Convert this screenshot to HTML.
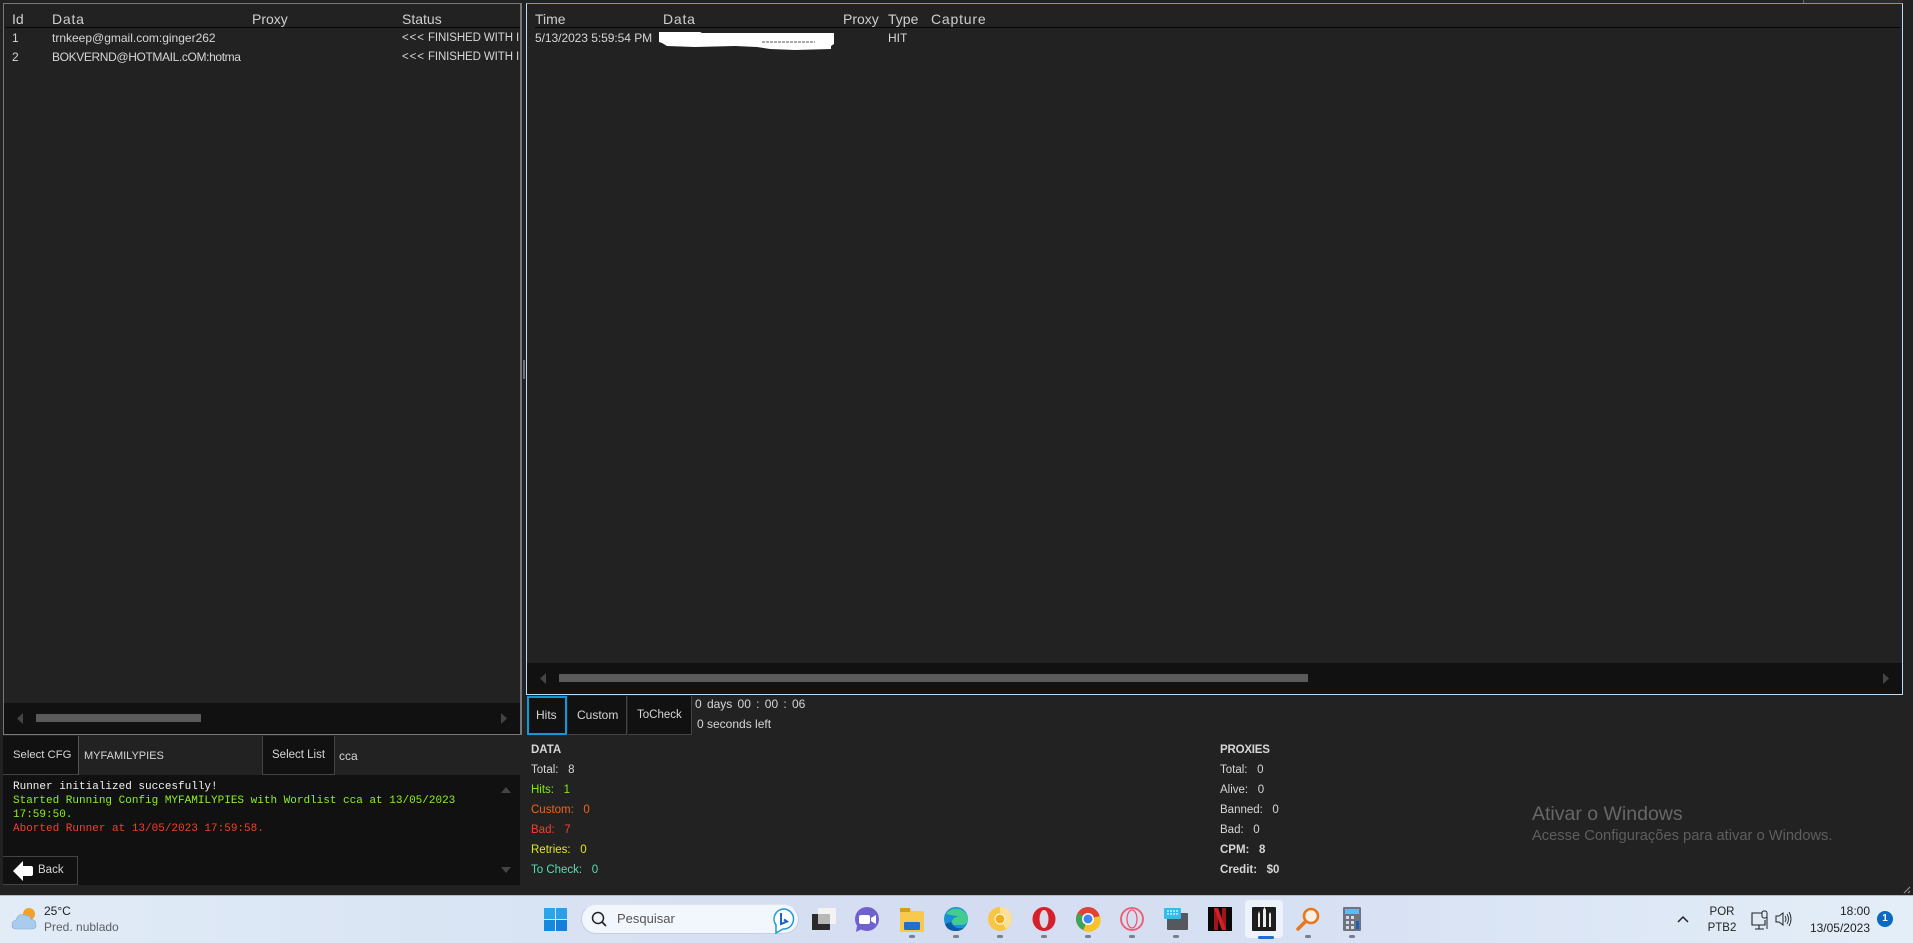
<!DOCTYPE html>
<html><head><meta charset="utf-8"><title>Runner</title>
<style>
html,body{margin:0;padding:0;width:1913px;height:943px;overflow:hidden;background:#222;}
body{position:relative;font-family:"Liberation Sans",sans-serif;color:#dcdcdc;}
.a{position:absolute;box-sizing:border-box;}
.t{position:absolute;white-space:nowrap;line-height:16px;font-size:12px;color:#d6d6d6;}
.h{font-size:14px;color:#cfcfcf;}
.n{font-size:11.500px;}
.b{font-weight:bold;}
.m{font-family:"Liberation Mono",monospace;font-size:11px;line-height:14px;}
.tb{font-family:"Liberation Sans","DejaVu Sans",sans-serif;color:#222;}
.dot{position:absolute;top:935px;width:6px;height:3px;border-radius:2px;background:#7a7f88;}
svg{position:absolute;overflow:visible;}
</style></head><body>

<!-- top strip pieces -->
<div class="a" style="left:1803px;top:0;width:99px;height:3px;background:#2b2b2b;border-left:1px solid #666;"></div>

<!-- left panel -->
<div class="a" style="left:3px;top:3px;width:519px;height:732px;border:1px solid #777;border-right-width:2px;background:#222;"></div>
<div class="a" style="left:5px;top:27px;width:515px;height:1px;background:#050505;"></div>
<div class="t h" style="left:12px;top:11px;">Id</div>
<div class="t h" style="left:52px;top:11px;letter-spacing:.8px;">Data</div>
<div class="t h" style="left:252px;top:11px;">Proxy</div>
<div class="t h" style="left:402px;top:11px;">Status</div>
<div class="t" style="left:12px;top:30px;">1</div>
<div class="t" style="left:52px;top:30px;">trnkeep@gmail.com:ginger262</div>
<div class="t n" style="left:402px;top:30px;width:118px;overflow:hidden;letter-spacing:-.1px;"><span style="letter-spacing:.9px;">&lt;&lt;&lt;</span> FINISHED WITH I</div>
<div class="t" style="left:12px;top:49px;">2</div>
<div class="t" style="left:52px;top:49px;letter-spacing:-.37px;">BOKVERND@HOTMAIL.cOM:hotma</div>
<div class="t n" style="left:402px;top:49px;width:118px;overflow:hidden;letter-spacing:-.1px;"><span style="letter-spacing:.9px;">&lt;&lt;&lt;</span> FINISHED WITH I</div>
<!-- left scrollbar -->
<div class="a" style="left:4px;top:703px;width:516px;height:31px;background:#111;"></div>
<div class="a" style="left:36px;top:714px;width:165px;height:8px;background:#5a5a5a;"></div>
<svg style="left:0;top:0" width="1" height="1"><path d="M23 713L17 718.500L23 724Z" fill="#444"/><path d="M501 713L507 718.500L501 724Z" fill="#444"/></svg>

<!-- splitter -->
<div class="a" style="left:523px;top:360px;width:2px;height:19px;background:#707070;"></div>

<!-- right panel -->
<div class="a" style="left:526px;top:3px;width:1377px;height:692px;border:1px solid #bcdcf5;border-top-color:#6e9ab8;background:#222;"></div>
<div class="a" style="left:535px;top:27px;width:1365px;height:1px;background:#050505;"></div>
<div class="t h" style="left:535px;top:11px;">Time</div>
<div class="t h" style="left:663px;top:11px;letter-spacing:.8px;">Data</div>
<div class="t h" style="left:843px;top:11px;">Proxy</div>
<div class="t h" style="left:888px;top:11px;">Type</div>
<div class="t h" style="left:931px;top:11px;letter-spacing:.8px;">Capture</div>
<div class="t" style="left:535px;top:30px;letter-spacing:-.05px;">5/13/2023 5:59:54 PM</div>
<div class="t" style="left:888px;top:30px;">HIT</div>
<svg style="left:0;top:0" width="1" height="1"><path d="M659 32H700L702 33H834V44L831 46V49L795 50L770 49L757 47L735 46L695 47L667 46L662 43L659 42Z" fill="#fff"/><path d="M762 42H815" stroke="#555" stroke-width="1" stroke-dasharray="3 1"/></svg>
<!-- right scrollbar -->
<div class="a" style="left:527px;top:663px;width:1375px;height:31px;background:#111;"></div>
<div class="a" style="left:559px;top:674px;width:749px;height:8px;background:#5a5a5a;"></div>
<svg style="left:0;top:0" width="1" height="1"><path d="M546 673L540 678.500L546 684Z" fill="#444"/><path d="M1883 673L1889 678.500L1883 684Z" fill="#444"/></svg>

<!-- select row -->
<div class="a" style="left:3px;top:736px;width:76px;height:39px;background:#111;border-right:1px solid #555;border-bottom:1px solid #444;"></div>
<div class="t" style="left:13px;top:747px;font-size:11.300px;">Select CFG</div>
<div class="t" style="left:84px;top:748px;font-size:11px;">MYFAMILYPIES</div>
<div class="a" style="left:262px;top:736px;width:73px;height:39px;background:#111;border:1px solid #444;border-top:none;"></div>
<div class="t" style="left:272px;top:747px;font-size:11.500px;">Select List</div>
<div class="t" style="left:339px;top:748px;">cca</div>

<!-- log -->
<div class="a" style="left:3px;top:775px;width:517px;height:110px;background:#111;"></div>
<div class="t m" style="left:13px;top:780px;color:#f2f2f2;">Runner initialized succesfully!</div>
<div class="t m" style="left:13px;top:794px;color:#8ef01e;">Started Running Config MYFAMILYPIES with Wordlist cca at 13/05/2023</div>
<div class="t m" style="left:13px;top:808px;color:#8ef01e;">17:59:50.</div>
<div class="t m" style="left:13px;top:822px;color:#f4402a;">Aborted Runner at 13/05/2023 17:59:58.</div>
<svg style="left:0;top:0" width="1" height="1"><path d="M501 793L506 787L511 793Z" fill="#444"/><path d="M501 867L506 873L511 867Z" fill="#444"/></svg>
<!-- back -->
<div class="a" style="left:3px;top:856px;width:75px;height:29px;background:#111;border:1px solid #444;border-left:none;"></div>
<svg style="left:0;top:0" width="1" height="1"><path d="M13 871L23 861V866H31Q33 866 33 868V874Q33 876 31 876H23V881Z" fill="#fff"/></svg>
<div class="t" style="left:38px;top:862px;font-size:11.500px;">Back</div>

<!-- tabs -->
<div class="a" style="left:527px;top:696px;width:40px;height:39px;background:#111;border:2px solid #0a9bd8;"></div>
<div class="t" style="left:536px;top:707px;">Hits</div>
<div class="a" style="left:568px;top:696px;width:59px;height:39px;background:#111;border-right:1px solid #444;border-bottom:1px solid #444;"></div>
<div class="t" style="left:577px;top:707px;">Custom</div>
<div class="a" style="left:628px;top:696px;width:64px;height:39px;background:#111;border-right:1px solid #444;border-bottom:1px solid #444;"></div>
<div class="t" style="left:637px;top:707px;font-size:11.500px;">ToCheck</div>
<div class="t" style="left:695px;top:696px;word-spacing:-.7px;">0&nbsp; days&nbsp; 00&nbsp; :&nbsp; 00&nbsp; :&nbsp; 06</div>
<div class="t" style="left:697px;top:716px;">0 seconds left</div>

<!-- stats left -->
<div class="t b n" style="left:531px;top:742px;">DATA</div>
<div class="t n" style="left:531px;top:762px;">Total:&nbsp;&nbsp; 8</div>
<div class="t n" style="left:531px;top:782px;color:#7fe81a;">Hits:&nbsp;&nbsp; 1</div>
<div class="t n" style="left:531px;top:802px;color:#f0651a;">Custom:&nbsp;&nbsp; 0</div>
<div class="t n" style="left:531px;top:822px;color:#f4402a;">Bad:&nbsp;&nbsp; 7</div>
<div class="t n" style="left:531px;top:842px;color:#e0e81a;">Retries:&nbsp;&nbsp; 0</div>
<div class="t n" style="left:531px;top:862px;color:#55dfb0;">To Check:&nbsp;&nbsp; 0</div>

<!-- stats right -->
<div class="t b n" style="left:1220px;top:742px;letter-spacing:-.2px;">PROXIES</div>
<div class="t n" style="left:1220px;top:762px;">Total:&nbsp;&nbsp; 0</div>
<div class="t n" style="left:1220px;top:782px;">Alive:&nbsp;&nbsp; 0</div>
<div class="t n" style="left:1220px;top:802px;">Banned:&nbsp;&nbsp; 0</div>
<div class="t n" style="left:1220px;top:822px;">Bad:&nbsp;&nbsp; 0</div>
<div class="t b n" style="left:1220px;top:842px;">CPM:&nbsp;&nbsp; 8</div>
<div class="t b n" style="left:1220px;top:862px;">Credit:&nbsp;&nbsp; $0</div>

<!-- activation -->
<div class="t" style="left:1532px;top:804px;font-size:19.500px;line-height:20px;color:#676767;">Ativar o Windows</div>
<div class="t" style="left:1532px;top:828px;font-size:14.700px;color:#5e5e5e;">Acesse Configurações para ativar o Windows.</div>
<svg style="left:0;top:0" width="1" height="1"><path d="M1904 893L1910 887M1908 893L1910 891" stroke="#999" stroke-width="1"/></svg>

<!-- taskbar -->
<div class="a" style="left:0;top:895px;width:1913px;height:48px;background:linear-gradient(90deg,#e1ecf7 0%,#d9e4f4 25%,#d4dcf1 50%,#d8e2f4 72%,#e3eef8 100%);border-top:1px solid #b5b8bd;"></div>

<!-- weather -->
<svg style="left:0;top:0" width="1" height="1">
<circle cx="29" cy="914" r="6" fill="#f2a227"/>
<path d="M16 929Q12 929 12 925Q12 921 16 920Q18 913 25 915Q31 916 31 919Q36 920 36 925Q36 929 32 929Z" fill="#a9cbee" stroke="#7fa8d6" stroke-width=".6"/>
</svg>
<div class="t tb" style="left:44px;top:903px;">25°C</div>
<div class="t tb" style="left:44px;top:919px;color:#5c6066;">Pred. nublado</div>

<!-- start -->
<svg style="left:0;top:0" width="1" height="1">
<rect x="544" y="908" width="11" height="11" fill="#2aa6e8"/><rect x="556" y="908" width="11" height="11" fill="#2ba0e6"/>
<rect x="544" y="920" width="11" height="11" fill="#1689dd"/><rect x="556" y="920" width="11" height="11" fill="#1580da"/>
</svg>

<!-- search -->
<div class="a" style="left:581px;top:904px;width:218px;height:30px;border-radius:15px;background:#f2f6fd;border:1px solid #c4cfe2;border-top-color:#dfe6f2;"></div>
<svg style="left:0;top:0" width="1" height="1">
<circle cx="598" cy="918" r="5.500" fill="none" stroke="#222" stroke-width="1.500"/><path d="M602 922L606 926" stroke="#222" stroke-width="1.700"/>
<path d="M784 909A10 10 0 1 1 783 929L776 933L776 925A10 10 0 0 1 784 909Z" fill="#fff" stroke="#1c9ad6" stroke-width="1.500"/>
<path d="M781 913V924L787 921.500L784 919.500" fill="none" stroke="#1565c8" stroke-width="2"/>
</svg>
<div class="t tb" style="left:617px;top:911px;color:#555;font-size:13px;">Pesquisar</div>

<!-- pinned icons -->
<svg style="left:0;top:0" width="1" height="1">
<!-- task view -->
<rect x="812" y="914" width="18" height="16" fill="#2b2b2b"/>
<rect x="818" y="908" width="18" height="16" fill="#f3f3f3"/>
<rect x="818" y="914" width="12" height="10" fill="#b8b8b8"/>
<!-- meet -->
<circle cx="867" cy="919" r="12" fill="#6f62cf"/><rect x="859" y="915" width="11" height="9" rx="2" fill="#fff"/><path d="M871 918L876 915V924L871 921Z" fill="#fff"/>
<path d="M857 926L856 932L862 929Z" fill="#6f62cf"/>
<!-- folder -->
<path d="M900 908H910L912 911H924V932H900Z" fill="#f9c94c"/><rect x="900" y="908" width="10" height="4" fill="#d99a20"/>
<rect x="904" y="922" width="16" height="8" rx="1" fill="#1a74c4"/>
<!-- edge -->
<circle cx="956" cy="919" r="12" fill="#1b8fd4"/>
<path d="M946 914A12 12 0 0 1 968 919Q968 925 961 925L954 925Q950 922 954 918Q960 915 966 918Z" fill="#42cd8f"/>
<path d="M945 924Q947 931 956 931Q961 931 964 928Q954 930 951 922Z" fill="#0c59a4"/>
<!-- yellow chrome -->
<circle cx="1000" cy="919" r="12" fill="#f6c644"/><path d="M1000 907A12 12 0 0 1 1012 919A12 12 0 0 1 1006 929L1003 924A6 6 0 0 0 1000 913Z" fill="#fbe196"/><circle cx="1000" cy="919" r="5" fill="#f2ad1c" stroke="#fff" stroke-width="1"/>
<!-- opera -->
<ellipse cx="1044" cy="919" rx="11.500" ry="12" fill="#d3202a"/><ellipse cx="1044" cy="919" rx="4.500" ry="9" fill="#d9dce8"/>
<!-- chrome -->
<circle cx="1088" cy="919" r="12" fill="#e04336"/><path d="M1088 919L1078 913A12 12 0 0 0 1083 930Z" fill="#3aa757"/><path d="M1088 919L1083 930.500A12 12 0 0 0 1100 916Z" fill="#f6c32a"/><circle cx="1088" cy="919" r="6" fill="#fff"/><circle cx="1088" cy="919" r="4.500" fill="#3d86f0"/>
<!-- opera gx -->
<circle cx="1132" cy="919" r="11" fill="none" stroke="#f0576f" stroke-width="1.800"/><ellipse cx="1132" cy="919" rx="5" ry="9" fill="none" stroke="#f0576f" stroke-width="1.300"/>
<!-- keyboard -->
<rect x="1167" y="913" width="21" height="17" rx="1" fill="#55585d"/><rect x="1164" y="908" width="17" height="11" rx="1" fill="#35bdea"/><path d="M1167 911H1178M1167 914H1178" stroke="#e6f8ff" stroke-width="1.200" stroke-dasharray="2 1"/>
<!-- netflix -->
<rect x="1208" y="907" width="24" height="24" fill="#0a0a0a"/><rect x="1214" y="908" width="4" height="22" fill="#a0151c"/><rect x="1222" y="908" width="4" height="22" fill="#a0151c"/><path d="M1214 908H1218L1226 930H1222Z" fill="#d11f26"/>
</svg>
<div class="a" style="left:1245px;top:900px;width:38px;height:38px;border-radius:4px;background:#eef3fb;"></div>
<svg style="left:0;top:0" width="1" height="1">
<rect x="1252" y="907" width="24" height="24" rx="1" fill="#1d1d1d"/>
<path d="M1258 927V914L1259 911L1260 914V927Z M1263 927V910L1264.500 907L1266 910V927Z M1269 927V914L1270 912L1271 914V927Z" fill="#ececec"/>
<rect x="1258" y="936" width="16" height="3" rx="1.500" fill="#1a6fd0"/>
<!-- loupe -->
<circle cx="1311" cy="916" r="7" fill="#f8f0e6" stroke="#e8781a" stroke-width="2.600"/><path d="M1305 922L1298 929" stroke="#e8781a" stroke-width="3.500" stroke-linecap="round"/>
<!-- calc -->
<rect x="1343" y="907" width="18" height="24" rx="1" fill="#6c7480"/><rect x="1345" y="909" width="14" height="5" fill="#4cc3ec"/>
<path d="M1346 916h3v3h-3zM1351 916h3v3h-3zM1346 921h3v3h-3zM1351 921h3v3h-3zM1346 926h3v3h-3zM1351 926h3v3h-3z" fill="#d8dbe0"/><rect x="1356" y="921" width="3" height="8" fill="#1d5fc0"/>
</svg>
<div class="dot" style="left:909px;"></div><div class="dot" style="left:953px;"></div>
<div class="dot" style="left:997px;"></div><div class="dot" style="left:1041px;"></div>
<div class="dot" style="left:1085px;"></div><div class="dot" style="left:1129px;"></div>
<div class="dot" style="left:1173px;"></div><div class="dot" style="left:1305px;"></div>
<div class="dot" style="left:1349px;"></div>

<!-- tray -->
<svg style="left:0;top:0" width="1" height="1">
<path d="M1678 922L1683 917L1688 922" fill="none" stroke="#222" stroke-width="1.500"/>
<path d="M1762 913H1752V925H1765V920M1755 929H1764M1759 925V929" fill="none" stroke="#222" stroke-width="1.100"/>
<rect x="1762" y="911" width="5" height="7" rx="2" fill="none" stroke="#222"/>
<path d="M1767 917V929" stroke="#222" stroke-width="1"/>
<path d="M1776 916H1779L1783 913V925L1779 922H1776Z" fill="none" stroke="#222"/>
<path d="M1785 916Q1787 919 1785 922M1787 914Q1790 919 1787 924M1789 912Q1793 919 1789 926" fill="none" stroke="#222" stroke-width=".9"/>
</svg>
<div class="t tb" style="left:1709px;top:904px;width:26px;text-align:center;font-size:11.500px;">POR</div>
<div class="t tb" style="left:1704px;top:920px;width:36px;text-align:center;font-size:11.500px;">PTB2</div>
<div class="t tb" style="left:1780px;top:903px;width:90px;text-align:right;">18:00</div>
<div class="t tb" style="left:1780px;top:920px;width:90px;text-align:right;">13/05/2023</div>
<div class="a" style="left:1877px;top:911px;width:16px;height:16px;border-radius:50%;background:#0a69c3;color:#fff;font-size:10px;font-weight:bold;line-height:16px;text-align:center;">1</div>

</body></html>
